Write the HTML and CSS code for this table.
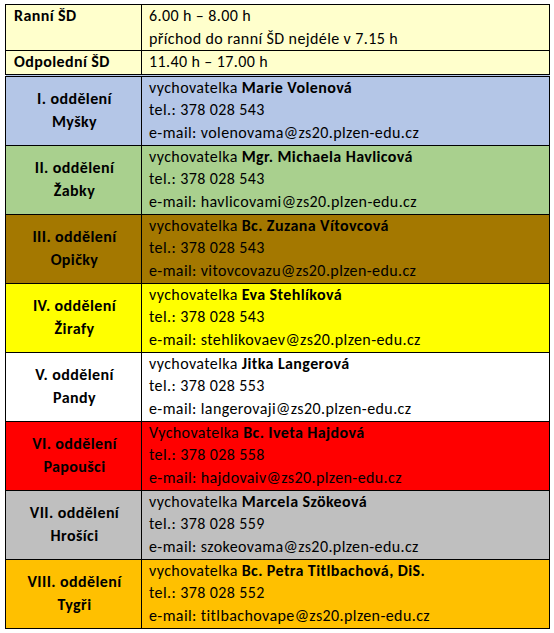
FILE: index.html
```html
<!DOCTYPE html>
<html lang="cs">
<head>
<meta charset="utf-8">
<link rel="stylesheet" href="styles.css">
</head>
<body>
<div class="page">
<table class="sched">
  <colgroup><col class="c1"><col class="c2"></colgroup>
  <tr class="r-yellow">
    <td class="lbl left">Ranní ŠD</td>
    <td class="info">6.00 h – 8.00 h<br>příchod do ranní ŠD nejdéle v 7.15 h</td>
  </tr>
  <tr class="r-yellow dbl">
    <td class="lbl left">Odpolední ŠD</td>
    <td class="info">11.40 h – 17.00 h</td>
  </tr>
  <tr class="grp r-blue">
    <td class="lbl">I. oddělení<br>Myšky</td>
    <td class="info">vychovatelka <b>Marie Volenová</b><br>tel.: 378 028 543<br>e-mail: volenovama@zs20.plzen-edu.cz</td>
  </tr>
  <tr class="grp r-green">
    <td class="lbl">II. oddělení<br>Žabky</td>
    <td class="info">vychovatelka <b>Mgr. Michaela Havlicová</b><br>tel.: 378 028 543<br>e-mail: havlicovami@zs20.plzen-edu.cz</td>
  </tr>
  <tr class="grp r-brown">
    <td class="lbl">III. oddělení<br>Opičky</td>
    <td class="info">vychovatelka <b>Bc. Zuzana Vítovcová</b><br>tel.: 378 028 543<br>e-mail: vitovcovazu@zs20.plzen-edu.cz</td>
  </tr>
  <tr class="grp r-lemon">
    <td class="lbl">IV. oddělení<br>Žirafy</td>
    <td class="info">vychovatelka <b>Eva Stehlíková</b><br>tel.: 378 028 543<br>e-mail: stehlikovaev@zs20.plzen-edu.cz</td>
  </tr>
  <tr class="grp r-white">
    <td class="lbl">V. oddělení<br>Pandy</td>
    <td class="info">vychovatelka <b>Jitka Langerová</b><br>tel.: 378 028 553<br>e-mail: langerovaji@zs20.plzen-edu.cz</td>
  </tr>
  <tr class="grp r-red">
    <td class="lbl">VI. oddělení<br>Papoušci</td>
    <td class="info">Vychovatelka <b>Bc. Iveta Hajdová</b><br>tel.: 378 028 558<br>e-mail: hajdovaiv@zs20.plzen-edu.cz</td>
  </tr>
  <tr class="grp r-grey">
    <td class="lbl">VII. oddělení<br>Hrošíci</td>
    <td class="info">vychovatelka <b>Marcela Szökeová</b><br>tel.: 378 028 559<br>e-mail: szokeovama@zs20.plzen-edu.cz</td>
  </tr>
  <tr class="grp r-orange">
    <td class="lbl">VIII. oddělení<br>Tygři</td>
    <td class="info">vychovatelka <b>Bc. Petra Titlbachová, DiS.</b><br>tel.: 378 028 552<br>e-mail: titlbachovape@zs20.plzen-edu.cz</td>
  </tr>
</table>
</div>
</body>
</html>
```
FILE: styles.css
```css
html, body {
  margin: 0;
  padding: 0;
  background: #ffffff;
}
.page {
  padding: 4px 5px;
}
.sched {
  border-collapse: collapse;
  table-layout: fixed;
  width: 544px;
  font-family: Carlito, Calibri, Lato, "Liberation Sans", sans-serif;
  font-size: 16px;
  letter-spacing: 0.4px;
  line-height: 22.6px;
  color: #000;
}
.c1 { width: 136px; }
.c2 { width: 408px; }
.sched td {
  border: 1px solid #000;
  padding: 0;
  vertical-align: top;
}
.sched .lbl {
  padding: 0 2px 0 4px;
  font-weight: bold;
  text-align: center;
  vertical-align: middle;
}
.sched .lbl.left {
  text-align: left;
  padding-left: 8px;
  vertical-align: top;
}
.sched .info {
  padding: 0 0 0 7px;
}
.sched b {
  font-weight: bold;
}
.dbl td {
  border-bottom: 3px double #000;
}
.grp td { height: 68px; }
.r-yellow { background: #ffffcc; }
.r-blue { background: #b4c6e7; }
.r-green { background: #a9d08e; }
.r-brown { background: #a47800; }
.r-lemon { background: #ffff00; }
.r-white { background: #ffffff; }
.r-red { background: #ff0000; }
.r-grey { background: #bfbfbf; }
.r-orange { background: #ffc000; }
```
